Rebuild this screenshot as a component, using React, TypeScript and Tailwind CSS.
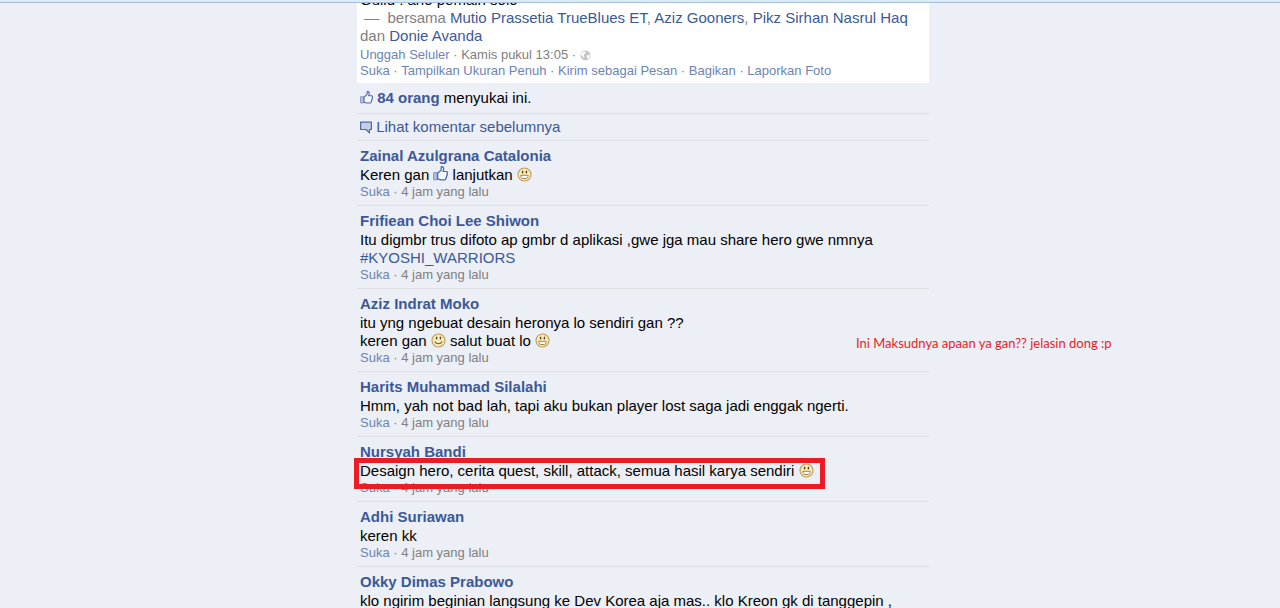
import React from 'react';

const ThumbIcon = ({ size = 13 }: { size?: number }) => (
    <svg width={size} height={size} viewBox="0 0 15 15" className="inline-block align-[-1px]" aria-hidden="true">
        <path d="M.6 6.6h3.6v7.2H.6z" fill="#b4c1dc" stroke="#8195c0" strokeWidth="1" />
        <path
            d="M4.6 7.2L8.2 4V1.1c0-.8 2.5-.7 2.5 1.4 0 1.1-.4 2.1-.8 3h3.3c1.6 0 1.6 1.9.7 2.4.6.6.4 1.9-.5 2.2.4.7.1 1.7-.6 2 .2.9-.3 1.7-1.3 1.7H7.8l-3.2-.9z"
            fill="#f4f7fc"
            stroke="#4a65a4"
            strokeWidth="1.2"
            strokeLinejoin="round"
        />
    </svg>
);

const CommentIcon = () => (
    <svg width="12" height="13" viewBox="0 0 12 13" className="inline-block align-[-2px]" aria-hidden="true">
        <path d="M.6 1.1h10.8v7.4H9.5v3.4L6 8.5H.6z" fill="#c6d0e4" stroke="#4f69a5" strokeWidth="1.2" strokeLinejoin="round" />
    </svg>
);

const GlobeIcon = () => (
    <svg width="11" height="11" viewBox="0 0 11 11" className="inline-block align-[-2px]" aria-hidden="true">
        <circle cx="5.5" cy="5.5" r="5" fill="#c6c6c6" />
        <path d="M1.3 3.4L4 1.2l1.8 1-1 1.6-1.4 1.1.9 1.3-.6 2-1-1.9-1.6-1zM7 5.2l2.6-.5.3 1.6-1.6 2.6-1.3-1.2z" fill="#fff" />
    </svg>
);

const Smiley = ({ grin = false }: { grin?: boolean }) => (
    <svg width="15" height="15" viewBox="0 0 15 15" className="inline-block align-[-2px]" aria-hidden="true">
        <circle cx="7.5" cy="7.5" r="6.5" fill="#fcebbd" stroke="#c29a50" strokeWidth="1.1" />
        <ellipse cx="5.6" cy="4.9" rx="0.8" ry="1.5" fill="#57431f" />
        <ellipse cx="9.4" cy="4.9" rx="0.8" ry="1.5" fill="#57431f" />
        {grin ? (
            <path d="M3.8 8.3h7.4c0 2-.9 3.2-2.2 3.2H6c-1.3 0-2.2-1.2-2.2-3.2z" fill="#fff" stroke="#94753c" strokeWidth="0.9" />
        ) : (
            <path d="M4 8.8c1.5 2.6 5.5 2.6 7 0" fill="none" stroke="#7a5c28" strokeWidth="1.1" strokeLinecap="round" />
        )}
    </svg>
);

interface Comment {
    name: string;
    body: React.ReactNode;
    highlighted?: boolean;
    note?: string;
}

const comments: Comment[] = [
    { name: 'Zainal Azulgrana Catalonia', body: <>Keren gan <ThumbIcon size={15} /> lanjutkan <Smiley grin /></> },
    {
        name: 'Frifiean Choi Lee Shiwon',
        body: (
            <>
                Itu digmbr trus difoto ap gmbr d aplikasi ,gwe jga mau share hero gwe nmnya
                <br />
                <a href="#kyoshi" className="text-[#3b5998]">#KYOSHI_WARRIORS</a>
            </>
        ),
    },
    {
        name: 'Aziz Indrat Moko',
        body: (
            <>
                itu yng ngebuat desain heronya lo sendiri gan ??
                <br />
                keren gan <Smiley /> salut buat lo <Smiley grin />
            </>
        ),
        note: 'Ini Maksudnya apaan ya gan?? jelasin dong :p',
    },
    { name: 'Harits Muhammad Silalahi', body: 'Hmm, yah not bad lah, tapi aku bukan player lost saga jadi enggak ngerti.' },
    {
        name: 'Nursyah Bandi',
        body: <>Desaign hero, cerita quest, skill, attack, semua hasil karya sendiri <Smiley grin /></>,
        highlighted: true,
    },
    { name: 'Adhi Suriawan', body: 'keren kk' },
    { name: 'Okky Dimas Prabowo', body: 'klo ngirim beginian langsung ke Dev Korea aja mas.. klo Kreon gk di tanggepin ,' },
];

const actions = ['Suka', 'Tampilkan Ukuran Penuh', 'Kirim sebagai Pesan', 'Bagikan', 'Laporkan Foto'];

const PersonLink = ({ children }: { children: string }) => (
    <a href="#profile" className="text-[#3b5998]">{children}</a>
);

const CommentRow = ({ name, body, highlighted, note }: Comment) => (
    <li className="relative border-t border-[#dddfe2] px-[3px] py-[5px]">
        <a href="#profile" className="block w-fit font-bold leading-5 text-[#3b5998]">{name}</a>
        <div className="relative w-fit leading-[18px]">
            <p>{body}</p>
            {highlighted && (
                <span className="absolute -top-1 -bottom-[9px] -left-1.5 -right-[11px] border-[5px] border-[#ed1c24]" />
            )}
        </div>
        <p className="text-[13px] leading-4 text-[#808080]">
            <button type="button" className="text-[#6d84b4]">Suka</button> · 4 jam yang lalu
        </p>
        {note && (
            <span className="absolute left-[499px] top-[45px] whitespace-nowrap font-[Lato,sans-serif] text-[13px] leading-[18px] text-[#ed1c24]">
                {note}
            </span>
        )}
    </li>
);

const App = () => {
    return (
        <div className="flex h-screen flex-col overflow-hidden bg-[#eceff6] font-['Liberation_Sans',Arial,sans-serif] text-[15px] text-black">
            <header className="h-[3px] shrink-0 border-b border-[#a5bdd6] bg-[#dce9f7]" />
            <main className="flex min-h-0 flex-1 justify-center overflow-hidden pl-1.5">
                <div className="w-full max-w-[572px]">
                    <section className="overflow-hidden bg-white px-[3px] pb-1">
                        <div className="-mt-3 leading-[18px]">
                            <p>Guild : ano pemain solo</p>
                            <p className="text-[#808080]">
                                &nbsp;—&nbsp; bersama <PersonLink>Mutio Prassetia TrueBlues ET</PersonLink>, <PersonLink>Aziz Gooners</PersonLink>,{' '}
                                <PersonLink>Pikz Sirhan Nasrul Haq</PersonLink> dan <PersonLink>Donie Avanda</PersonLink>
                            </p>
                        </div>
                        <p className="mt-0.5 text-[13px] leading-4 text-[#808080]">
                            <a href="#mobile" className="text-[#6d84b4]">Unggah Seluler</a> · Kamis pukul 13:05 · <GlobeIcon />
                        </p>
                        <p className="text-[13px] leading-4 text-[#808080]">
                            {actions.map((action, i) => (
                                <React.Fragment key={action}>
                                    {i > 0 && ' · '}
                                    <button type="button" className="text-[#6d84b4]">{action}</button>
                                </React.Fragment>
                            ))}
                        </p>
                    </section>

                    <p className="px-[3px] py-[5px] leading-5">
                        <ThumbIcon /> <a href="#likes" className="font-bold text-[#3b5998]">84 orang</a> menyukai ini.
                    </p>
                    <p className="border-t border-[#dddfe2] px-[3px] py-[3px] leading-5">
                        <a href="#previous" className="text-[#3b5998]"><CommentIcon /> Lihat komentar sebelumnya</a>
                    </p>

                    <ul>
                        {comments.map(comment => (
                            <CommentRow key={comment.name} {...comment} />
                        ))}
                    </ul>
                </div>
            </main>
        </div>
    );
};

export default App;
